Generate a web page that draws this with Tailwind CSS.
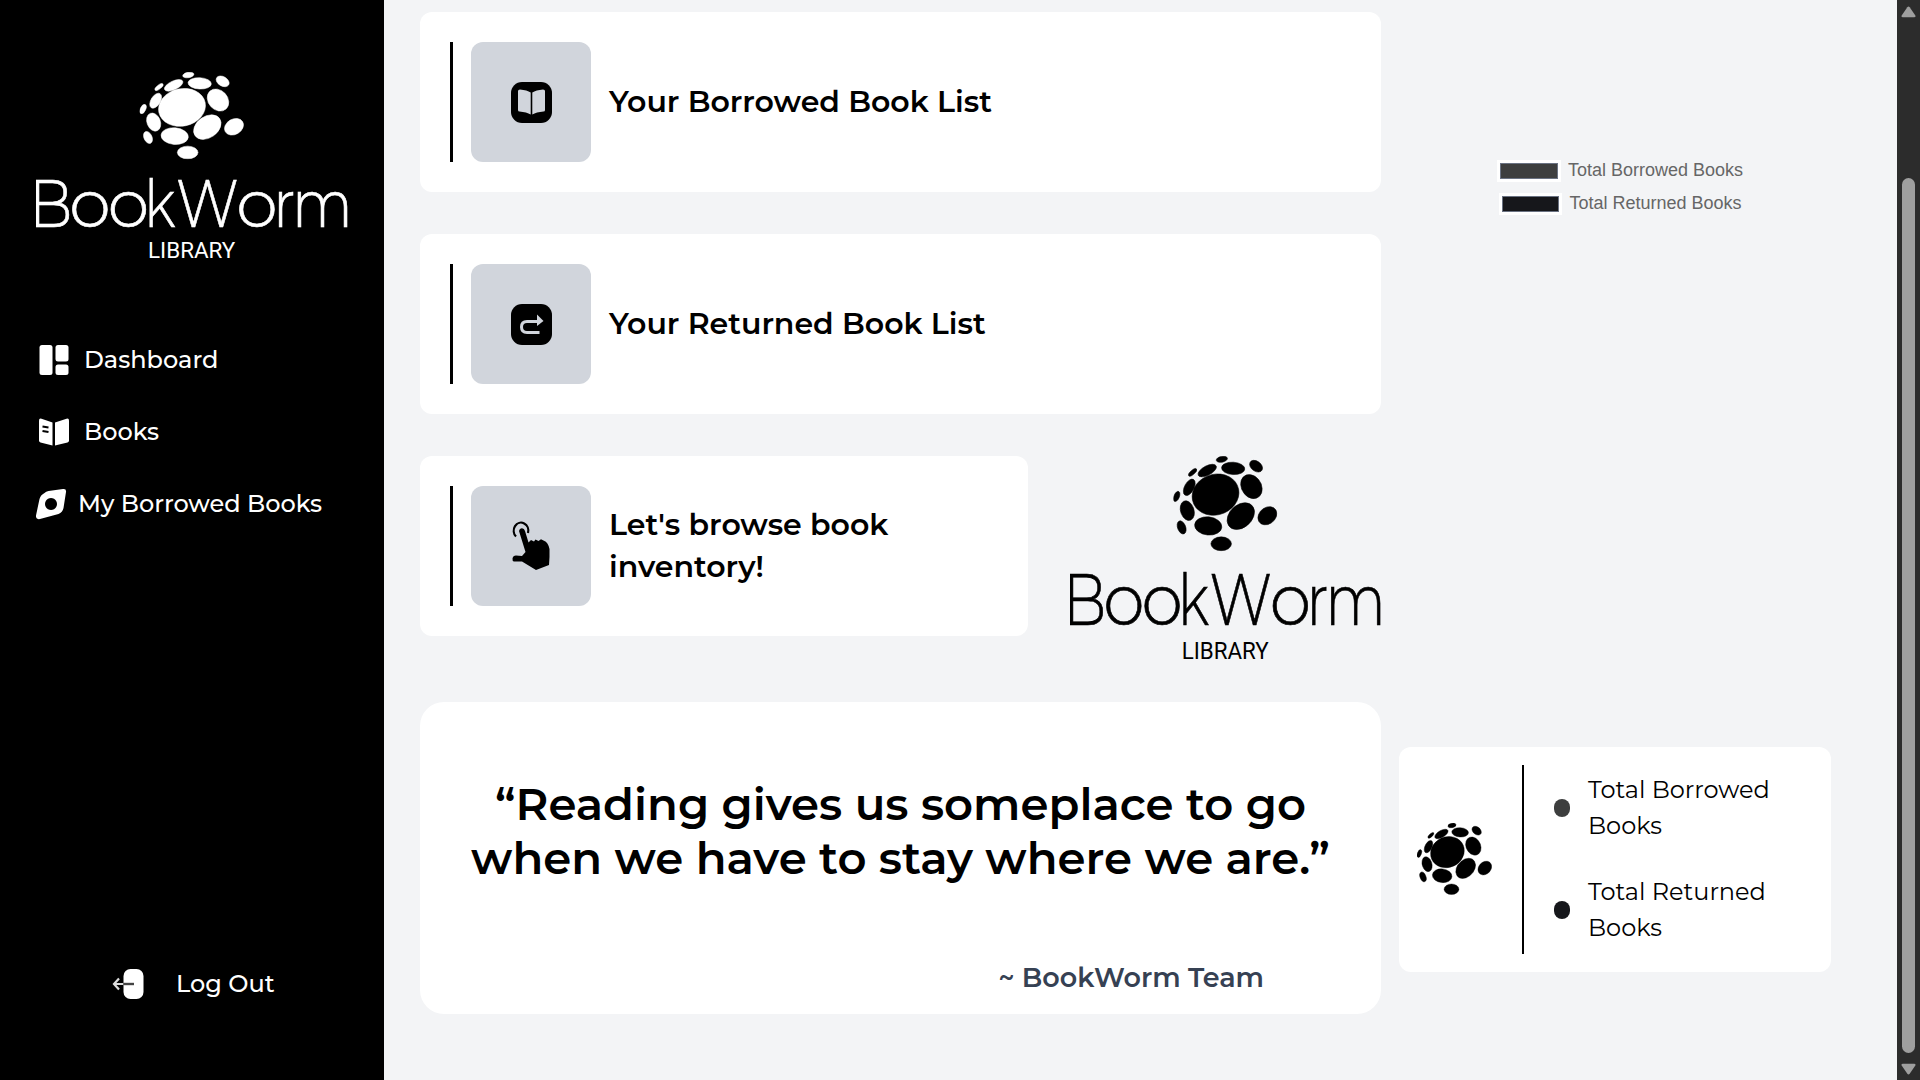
<!DOCTYPE html>
<html lang="en">
<head>
<meta charset="utf-8">
<title>BookWorm Library</title>
<script src="https://cdn.jsdelivr.net/npm/@tailwindcss/browser@4"></script>
</head>
<body class="flex h-[1080px] w-[1920px] overflow-hidden bg-gray-100 font-['Montserrat','Inter',sans-serif] text-black">

<svg class="hidden">
  <symbol id="mark" viewBox="359 35 313 262" preserveAspectRatio="none">
    <g stroke="currentColor" stroke-width="1.5">
    <ellipse cx="505" cy="44" rx="17" ry="8" transform="rotate(-10 505 44)"/>
    <ellipse cx="461" cy="75" rx="30" ry="13" transform="rotate(-25 461 75)"/>
    <ellipse cx="539" cy="69" rx="35" ry="17" transform="rotate(3 539 69)"/>
    <ellipse cx="608" cy="63" rx="21" ry="14" transform="rotate(30 608 63)"/>
    <ellipse cx="417" cy="80" rx="15" ry="6" transform="rotate(-38 417 80)"/>
    <ellipse cx="407" cy="121" rx="25" ry="14" transform="rotate(-58 407 121)"/>
    <ellipse cx="486" cy="141" rx="71" ry="56" transform="rotate(-12 486 141)"/>
    <ellipse cx="594" cy="119" rx="36" ry="29" transform="rotate(48 594 119)"/>
    <ellipse cx="369" cy="146" rx="15" ry="8" transform="rotate(-65 369 146)"/>
    <ellipse cx="401" cy="185" rx="28" ry="20" transform="rotate(68 401 185)"/>
    <ellipse cx="562" cy="200" rx="45" ry="32" transform="rotate(-35 562 200)"/>
    <ellipse cx="642" cy="199" rx="30" ry="23" transform="rotate(-30 642 199)"/>
    <ellipse cx="384" cy="231" rx="19" ry="12" transform="rotate(65 384 231)"/>
    <ellipse cx="464" cy="227" rx="41" ry="25" transform="rotate(5 464 227)"/>
    <ellipse cx="503" cy="276" rx="31" ry="19"/>
    </g>
  </symbol>
  <symbol id="logo" viewBox="48 35 936 560" preserveAspectRatio="none">
    <use href="#mark" x="359" y="35" width="313" height="262"/>
    <text y="498" font-family="Montserrat" font-weight="350" font-size="200" stroke="currentColor" stroke-width="2"><tspan x="27" textLength="130" lengthAdjust="spacingAndGlyphs">B</tspan><tspan x="148 263">oo</tspan><tspan x="373" textLength="93" lengthAdjust="spacingAndGlyphs">k</tspan><tspan x="468" textLength="188" lengthAdjust="spacingAndGlyphs">W</tspan><tspan x="649">o</tspan><tspan x="759.5" textLength="66" lengthAdjust="spacingAndGlyphs">r</tspan><tspan x="816" textLength="182" lengthAdjust="spacingAndGlyphs">m</tspan></text>
    <text x="384" y="592" font-family="Roboto" font-weight="400" font-size="66" textLength="262" lengthAdjust="spacingAndGlyphs">LIBRARY</text>
  </symbol>
</svg>

<aside class="flex h-full w-96 shrink-0 flex-col bg-black px-9 pt-[72px] pb-[78px] text-2xl/9 font-medium text-white">
  <svg class="h-[187px] w-[312px] fill-current"><use href="#logo"/></svg>
  <nav class="mt-[83px] flex flex-col gap-9">
    <a class="flex h-9 items-center gap-3.5">
      <svg class="h-9 w-[34px] fill-white" viewBox="0 0 34 36"><rect x="3.5" y="3" width="13" height="30" rx="2.5"/><rect x="19.5" y="3" width="13" height="16.5" rx="2.5"/><rect x="19.5" y="22.5" width="13" height="10.5" rx="2.5"/></svg>
      <span>Dashboard</span>
    </a>
    <a class="flex h-9 items-center gap-3.5">
      <svg class="h-9 w-[34px] fill-white" viewBox="0 0 34 36"><path d="M3 6.500q0-2.500 2.500-1.800L16.500 8.500v23L4.500 28.500Q3 28 3 26.500z"/><path d="M33 6.500q0-2.500-2.500-1.800L19 8.500v23l12.500-3Q33 28 33 26.500z"/><path d="M6.500 12.500l6 1M6.500 17l6 1" stroke="#000" stroke-width="2"/></svg>
      <span>Books</span>
    </a>
    <a class="flex h-9 items-center gap-[9px]">
      <svg class="h-9 w-[33px] fill-white" viewBox="0 0 33 36"><path fill-rule="evenodd" d="M8.500 7Q10 5.500 12.500 5L27 3q3.500-.5 3 3L27.500 22q-1 4.500-5 6L4 33q-4.500.8-4-3.500L3.500 13Q4.500 9 8.500 7zM15 12a6 6 0 1 0 .01 0z"/></svg>
      <span>My Borrowed Books</span>
    </a>
  </nav>
  <a class="mt-auto flex h-9 items-center gap-8 pl-[75px]">
    <svg class="h-9 w-[33px]" viewBox="0 0 33 36"><rect x="12.500" y="3" width="20" height="30" rx="7" fill="#fff"/><path d="M12 18H3M8 12.500L3 18l5 5.500" fill="none" stroke="#ddd" stroke-width="2.200"/><path d="M12.500 18H23" stroke="#444" stroke-width="2.400"/></svg>
    <span>Log Out</span>
  </a>
</aside>

<main class="flex grow gap-[18px] pt-3 pl-9">
  <div class="flex w-[961px] flex-col gap-[42px] text-[30px]/[42px] font-semibold">
    <section class="flex h-[180px] items-center rounded-xl bg-white p-[30px]">
      <div class="mr-[18px] h-[120px] w-[3px] bg-black"></div>
      <div class="mr-[18px] flex size-[120px] items-center justify-center rounded-xl bg-gray-300">
        <svg class="size-[41px]" viewBox="0 0 41 41"><rect width="41" height="41" rx="11"/><path class="fill-gray-300" d="M7 9q0-1.500 2-1.500 7 .5 10.700 3V32.500q-4-2.500-11.200-3-1.500 0-1.500-1.500zM34 9q0-1.500-2-1.500-7 .5-10.700 3V32.500q4-2.500 11.200-3 1.500 0 1.500-1.500z"/></svg>
      </div>
      <h2>Your Borrowed Book List</h2>
    </section>
    <section class="flex h-[180px] items-center rounded-xl bg-white p-[30px]">
      <div class="mr-[18px] h-[120px] w-[3px] bg-black"></div>
      <div class="mr-[18px] flex size-[120px] items-center justify-center rounded-xl bg-gray-300">
        <svg class="size-[41px]" viewBox="0 0 41 41"><rect width="41" height="41" rx="11"/><path class="stroke-gray-300" d="M28.500 28.500H16q-5.500 0-5.500-5.500t5.500-5.500H27" fill="none" stroke-width="3"/><path class="fill-gray-300" d="M26 10.500l6.500 6.500-6.500 5z"/></svg>
      </div>
      <h2>Your Returned Book List</h2>
    </section>
    <div class="flex h-[204px] justify-between">
      <section class="flex h-[180px] w-[608px] items-center rounded-xl bg-white p-[30px]">
        <div class="mr-[18px] h-[120px] w-[3px] shrink-0 bg-black"></div>
        <div class="mr-[18px] flex size-[120px] shrink-0 items-center justify-center rounded-xl bg-gray-300">
          <svg class="h-[52px] w-10" viewBox="0 0 40 52"><path d="M5 16.500A7.300 8 0 1 1 17 13" fill="none" stroke="#000" stroke-width="2.200"/><path d="M8 11q.5-3 3-2.800 2.300.2 3 2.800l3.500 11.500 2.500-2.500 3 1.500 1.500-2 3 1.500 2.500-1.800 3 1.500Q37 22 38.500 29v8L38 45l-13 5L11 41.500H3q-1.800-.2-1.500-3Q2 35.500 5 35.500L11 36l3.500-4z"/></svg>
        </div>
        <h2 class="w-[340px]">Let's browse book<br>inventory!</h2>
      </section>
      <svg class="h-[204px] w-[311px] fill-current"><use href="#logo"/></svg>
    </div>
    <section class="flex h-[312px] flex-col rounded-3xl bg-white pt-[75px] text-center">
      <blockquote class="text-[45px]/[54px]">“Reading gives us someplace to go<br>when we have to stay where we are.”</blockquote>
      <p class="mt-[75px] pr-[117px] text-right text-[27px]/9 text-gray-700">~ BookWorm Team</p>
    </section>
  </div>

  <div class="flex w-[432px] flex-col">
    <div class="flex flex-col gap-[11px] pt-[148px] pl-[98px] font-['Liberation_Sans',sans-serif] text-lg/[21px] text-[#666]">
      <div class="flex gap-[7.5px]"><i class="h-[22px] w-[63.5px] border-3 border-white bg-[#3d3e3e] outline-1 -outline-offset-4 outline-gray-500"></i>Total Borrowed Books</div>
      <div class="flex gap-[7.5px] pl-[1.5px]"><i class="h-[22px] w-[63.5px] border-3 border-white bg-[#16171b] outline-1 -outline-offset-4 outline-gray-500"></i>Total Returned Books</div>
    </div>
    <section class="mt-auto mb-[108px] flex h-[225px] items-center rounded-xl bg-white p-[18px]">
      <svg class="mb-px h-[72px] w-[75px] fill-current"><use href="#mark"/></svg>
      <div class="ml-[30px] h-[189px] w-0.5 bg-black"></div>
      <ul class="mb-px ml-[30px] flex flex-col gap-[30px] text-2xl/9">
        <li class="flex items-center gap-[18px]"><i class="h-[18px] w-4 rounded-full bg-[#3d3e3e]"></i><span>Total Borrowed<br>Books</span></li>
        <li class="flex items-center gap-[18px]"><i class="h-[18px] w-4 rounded-full bg-[#16171b]"></i><span>Total Returned<br>Books</span></li>
      </ul>
    </section>
  </div>
</main>

<div class="flex h-full w-[23px] shrink-0 flex-col items-center bg-[#2c2c2c] pt-1.5 pb-[5px]">
  <svg class="h-3 w-[15px] fill-[#9f9f9f]" viewBox="0 0 15 12"><path d="M6.300 1.200q1.200-1.500 2.400 0l5.500 8q1 2-1 2H1.800q-2 0-1-2z"/></svg>
  <div class="mt-40 w-[13px] grow rounded-full bg-[#9f9f9f]"></div>
  <svg class="mt-2.5 h-3 w-[15px] fill-[#9f9f9f]" viewBox="0 0 15 12"><path d="M6.300 10.800q1.200 1.500 2.400 0l5.500-8q1-2-1-2H1.800q-2 0-1 2z"/></svg>
</div>
</body>
</html>
